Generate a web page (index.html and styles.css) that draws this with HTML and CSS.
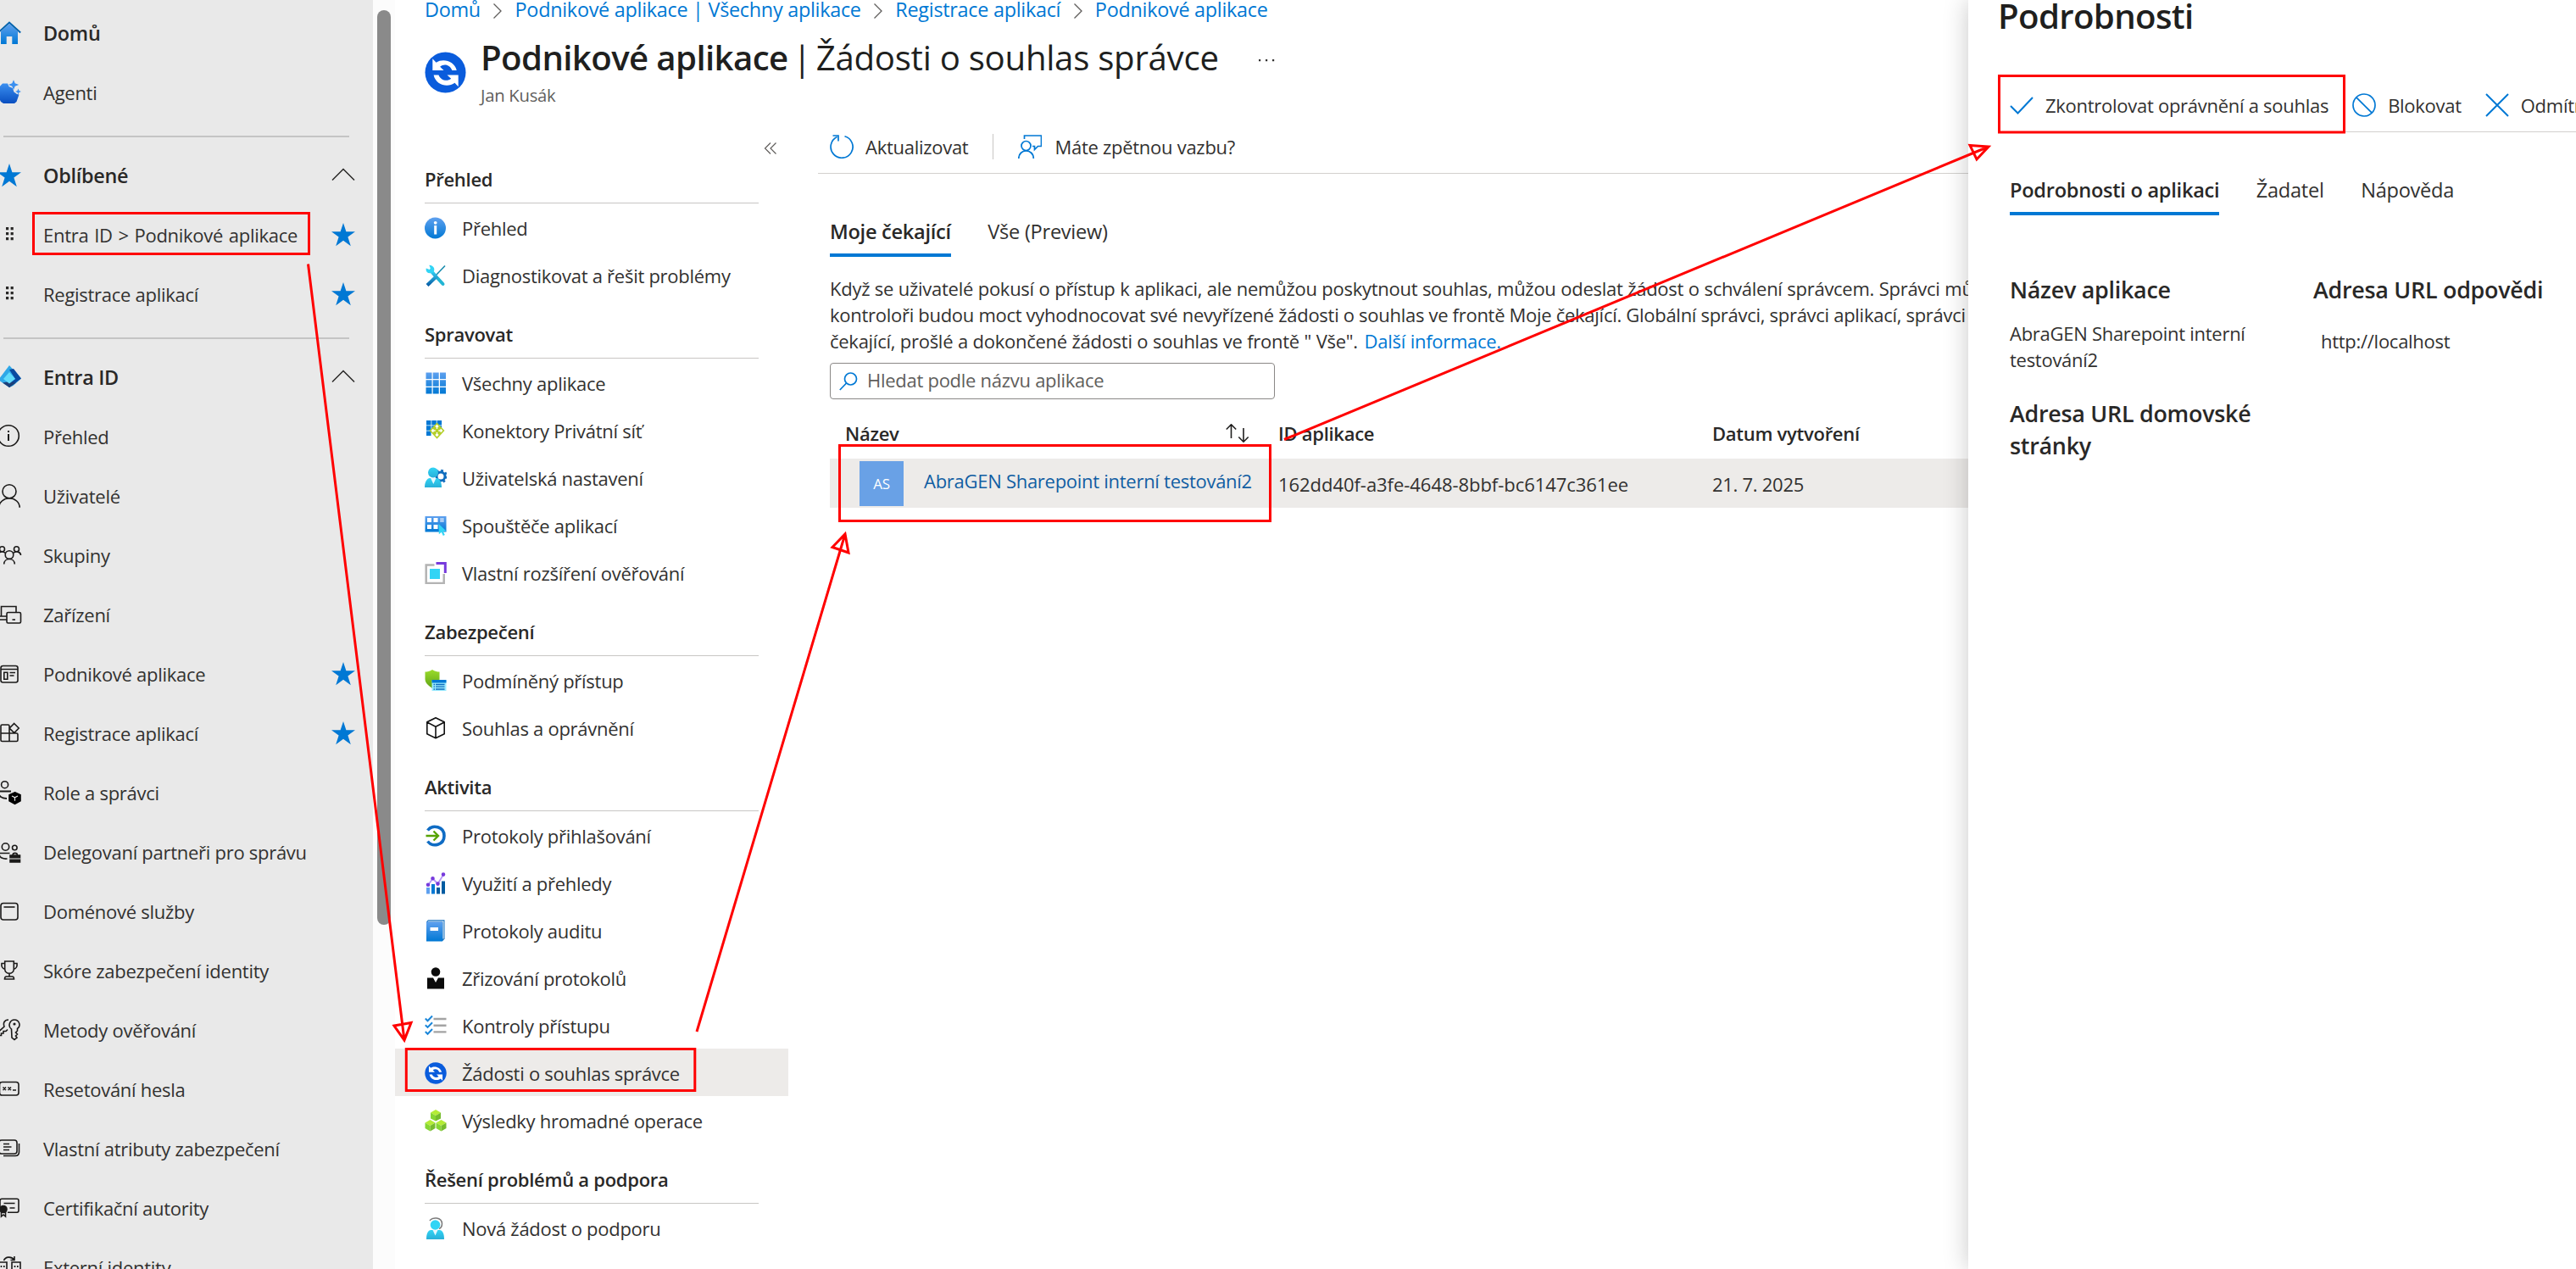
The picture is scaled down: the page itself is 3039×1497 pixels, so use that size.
FILE: index.html
```html
<!DOCTYPE html>
<html lang="cs">
<head>
  <meta charset="UTF-8">
  <meta name="viewport" content="width=device-width, initial-scale=1.0">
  <title>Podnikové aplikace | Žádosti o souhlas správce</title>
  <link rel="stylesheet" href="styles.css">
</head>
<body>
  <!-- shared icons -->
  <svg class="defs" width="0" height="0">
    <defs>
      <linearGradient id="blue" x1="0" y1="0" x2="0" y2="1"><stop offset="0" stop-color="#5ea0ef"/><stop offset="1" stop-color="#0078d4"/></linearGradient>
      <linearGradient id="deep" x1="0" y1="0" x2="0" y2="1"><stop offset="0" stop-color="#3a8ff0"/><stop offset="1" stop-color="#0a4fc0"/></linearGradient>
      <linearGradient id="cyan" x1="0" y1="0" x2="0" y2="1"><stop offset="0" stop-color="#32d4f5"/><stop offset="1" stop-color="#28afd8"/></linearGradient>
      <linearGradient id="green" x1="0" y1="0" x2="0" y2="1"><stop offset="0" stop-color="#9bdc2c"/><stop offset="1" stop-color="#5fa315"/></linearGradient>
      <linearGradient id="wrench" x1="0" y1="0" x2="0" y2="1"><stop offset="0" stop-color="#32d4f5"/><stop offset="1" stop-color="#0a5fa8"/></linearGradient>
    </defs>
    <symbol id="star" viewBox="0 0 28 28"><path fill="#0078d4" d="M14 0l3.400 10.200H28l-8.600 6.400 3.400 10.600L14 20.800l-8.800 6.400 3.400-10.600L0 10.200h10.600z"/></symbol>
    <symbol id="chevron" viewBox="0 0 28 28"><path fill="none" stroke="#292827" stroke-width="1.500" d="M1 19.500L14 6.500l13 13"/></symbol>
    <symbol id="dots" viewBox="0 0 28 28"><path fill="#292827" d="M10 5h3.200v3.200H10zM15.600 5h3.200v3.200h-3.200zM10 11h3.200v3.200H10zM15.600 11h3.200v3.200h-3.200zM10 17h3.200v3.200H10zM15.600 17h3.200v3.200h-3.200z"/></symbol>
    <symbol id="sync" viewBox="0 0 50 50">
      <circle cx="25" cy="25" r="24.500" fill="#0a5cdc"/>
      <path fill="#fff" d="M9.500 8.500v14h13.500l-4.500-4.500c5-4 12-2.500 14.500 4.500h5.500C36 11 22 7.500 13.800 13zM40.500 42V28H27l4.800 4.500c-5 4-12.500 2-15-4.500h-6C13.500 40.500 28 43.500 36.200 37.500z"/>
    </symbol>
    <symbol id="crumb" viewBox="0 0 12 20"><path fill="none" stroke="#605e5c" stroke-width="1.300" d="M1.500 1.500L10 10l-8.500 8.500"/></symbol>
  </svg>

  <div class="app">
    <nav class="sidebar">
      <div class="nav-item nav-head">
        <svg class="nav-icon" viewBox="0 0 28 28"><path fill="url(#blue)" d="M4 12L14 3l10 9v15h-6.700v-9h-6.600v9H4z"/><path fill="none" stroke="#0062ad" stroke-width="2" d="M.8 13.500L14 1.500l13.200 12"/></svg>
        <span>Domů</span>
      </div>
      <div class="nav-item">
        <svg class="nav-icon" viewBox="0 0 28 28"><path fill="url(#deep)" d="M6 3.500h6l1.500 3.500 4.500 2 1.500 4.500 3.500 2.500 2.500.5-3 8.500-2.500 2H7l-3-2-4-8v-7z"/><path fill="#3a8ff0" d="M19-.8l1.700 4.100 4.500 1.700-4.500 1.700L19 11l-1.700-4.300L12.800 5l4.500-1.700zM24.500 9.500l1 2.500 2.500 1-2.500 1-1 2.500-1-2.500-2.500-1 2.500-1z"/></svg>
        <span>Agenti</span>
      </div>
      <hr class="nav-line">
      <div class="nav-item nav-head">
        <svg class="nav-icon"><use href="#star"/></svg>
        <span>Oblíbené</span>
        <svg class="nav-end"><use href="#chevron"/></svg>
      </div>
      <div class="nav-item">
        <svg class="nav-icon"><use href="#dots"/></svg>
        <span class="path">Entra ID &gt; Podnikové aplikace</span>
        <svg class="nav-end"><use href="#star"/></svg>
      </div>
      <div class="nav-item">
        <svg class="nav-icon"><use href="#dots"/></svg>
        <span>Registrace aplikací</span>
        <svg class="nav-end"><use href="#star"/></svg>
      </div>
      <hr class="nav-line">
      <div class="nav-item nav-head">
        <svg class="nav-icon" viewBox="0 0 28 28"><path fill="#2fa8e8" d="M14 0L28 15.500l-9.500 8.500L14 26 1 17z"/><path fill="#0a4aa0" d="M14 5l5-1 9 11.500L14 26l-5-4.500L21 16z"/><path fill="#1d3f78" d="M14 19l8 1.500L14 26l-8-5.500z"/><path fill="#62dcfb" d="M14 8l7 8-7 5.500L7 16z"/></svg>
        <span>Entra ID</span>
        <svg class="nav-end"><use href="#chevron"/></svg>
      </div>
      <div class="nav-item">
        <svg class="nav-icon line" viewBox="0 0 28 28"><circle cx="13" cy="13" r="12.300"/><path stroke-width="2" d="M13 11v8M13 7v2"/></svg>
        <span>Přehled</span>
      </div>
      <div class="nav-item">
        <svg class="nav-icon line" viewBox="0 0 28 28"><circle cx="14" cy="8.700" r="8"/><path d="M1.800 27.800a12.200 11 0 0 1 24.400 0"/></svg>
        <span>Uživatelé</span>
      </div>
      <div class="nav-item">
        <svg class="nav-icon line" viewBox="0 0 28 28"><circle cx="14" cy="13.500" r="4.800"/><path d="M7.700 24.500c0-8 12.600-8 12.600 0"/><circle cx="22.500" cy="6.800" r="3"/><circle cx="5.500" cy="6.800" r="3"/><path d="M18.500 11.500c4-3.500 9-1 9 2.500M9.500 11.500c-4-3.500-9-1-9 2.500"/></svg>
        <span>Skupiny</span>
      </div>
      <div class="nav-item">
        <svg class="nav-icon line" viewBox="0 0 28 28"><path d="M4.500 15.500V4.500H22V11M0 16h11M0 20h11"/><rect x="11" y="11.500" width="16.500" height="12.500" rx="1.500"/><path d="M17.500 20h3.500"/></svg>
        <span>Zařízení</span>
      </div>
      <div class="nav-item">
        <svg class="nav-icon line" viewBox="0 0 28 28"><rect x="4" y="4.500" width="20" height="19.500" rx="2.500"/><path d="M4 8.500h20M14.500 12.500h6.500M14.500 16h5"/><path d="M7.800 12.300h4v8h-4z"/></svg>
        <span>Podnikové aplikace</span>
        <svg class="nav-end"><use href="#star"/></svg>
      </div>
      <div class="nav-item">
        <svg class="nav-icon line" viewBox="0 0 28 28"><path d="M14 5.500c0-1-.5-1.500-1.500-1.500H5.500C4.500 4 4 4.500 4 5.500V22c0 1 .5 1.500 1.500 1.500h17c1 0 1.500-.5 1.500-1.500v-6.500c0-1-.5-1.500-1.500-1.500H4M14 5v18.500M19.700 2.500l5.500 5.500-5.500 5.500L14.200 8z"/></svg>
        <span>Registrace aplikací</span>
        <svg class="nav-end"><use href="#star"/></svg>
      </div>
      <div class="nav-item">
        <svg class="nav-icon line" viewBox="0 0 28 28"><circle cx="8.600" cy="4.700" r="4"/><path stroke-width="2" d="M0 12.500h16M2 17c2 3 5 4 9 4"/><path fill="#000" stroke="#000" d="M20.500 13.800l6.500 3v7l-6.500 3.500-6.500-3.500v-7z"/><path stroke="#e9e9e9" stroke-width="1.200" d="M17 18l3.500 1.800L24 18M20.500 19.800v4"/></svg>
        <span>Role a správci</span>
      </div>
      <div class="nav-item">
        <svg class="nav-icon line" viewBox="0 0 28 28"><circle cx="9.500" cy="8" r="4.200"/><circle cx="20.300" cy="9" r="2.800"/><path d="M2 15.500h12.500M2 16c0 5 5 6.500 9.500 6"/><path fill="#1b1a19" d="M15 18h11.500v8H15z"/><path d="M18 18c0-3.500 5.500-3.500 5.500 0"/><path stroke="#e9e9e9" stroke-width="1" d="M14 22h13.500"/></svg>
        <span>Delegovaní partneři pro správu</span>
      </div>
      <div class="nav-item">
        <svg class="nav-icon line" viewBox="0 0 28 28"><rect x="4" y="4.500" width="20" height="19.500" rx="3"/><path d="M7.500 9h13"/></svg>
        <span>Doménové služby</span>
      </div>
      <div class="nav-item">
        <svg class="nav-icon line" viewBox="0 0 28 28"><path d="M8.700 3h10.600v9c0 7-10.600 7-10.600 0zM8.700 5.500H5c-.5 3 .5 6 4 7M19.300 5.500H23c.5 3-.5 6-4 7M14 17.500v3.500M8.500 24c0-2 .5-3 2-3h7c1.500 0 2 1 2 3z"/></svg>
        <span>Skóre zabezpečení identity</span>
      </div>
      <div class="nav-item">
        <svg class="nav-icon line" viewBox="0 0 28 28"><path d="M16.500 13c-5-4-1.500-11 3.500-11 6 0 8 7.500 3.500 10.500v2.500l-2 2 2 2-2 2 1.500 2-3 2.500-3-2.500zM13 2C8 2 6.500 6 8 10l-7.500 7v3.500h4v-2.500h2.500v-2.500h3l2-2"/><circle cx="20" cy="7" r=".8"/></svg>
        <span>Metody ověřování</span>
      </div>
      <div class="nav-item">
        <svg class="nav-icon line" viewBox="0 0 28 28"><rect x="2.500" y="5.500" width="22.500" height="15.500" rx="3"/><path d="M6.500 11.500l3.500 3.500M10 11.500L6.500 15M12.500 11.500l3.500 3.500M16 11.500L12.500 15M18 15h4"/></svg>
        <span>Resetování hesla</span>
      </div>
      <div class="nav-item">
        <svg class="nav-icon line" viewBox="0 0 28 28"><rect x="2" y="4" width="21" height="16" rx="3"/><path d="M25.500 8v10c0 3-1.500 4.500-4.500 4.500H7M7 8.500h7M7 12h9.500M7 15.500h7"/></svg>
        <span>Vlastní atributy zabezpečení</span>
      </div>
      <div class="nav-item">
        <svg class="nav-icon line" viewBox="0 0 28 28"><path d="M3 14V5.500C3 4 4 3.300 5 3.300h18c1 0 2 .7 2 2.200v11.500c0 1.500-1 2.200-2 2.200H12M7.500 8.500h13M14.500 14h6"/><circle cx="7" cy="15.500" r="4" fill="#1b1a19"/><path d="M4.500 18v6l2.500-2 2.500 2v-6"/></svg>
        <span>Certifikační autority</span>
      </div>
      <div class="nav-item">
        <svg class="nav-icon line" viewBox="0 0 28 28"><path d="M1 28V8h10v20M17 28V8h10v20M7.500 6c2-5 9-5 12-1M20 1v4.500h-4.500"/><path stroke-dasharray="2 2" d="M4.500 12v14M7.800 12v14M20.500 12v14M23.800 12v14"/></svg>
        <span>Externí identity</span>
      </div>
    </nav>
    <div class="scrollbar"><div class="thumb"></div></div>

    <main class="main">
      <header class="header">
        <div class="breadcrumb">
          <a>Domů</a><svg class="crumb"><use href="#crumb"/></svg>
          <a>Podnikové aplikace | Všechny aplikace</a><svg class="crumb"><use href="#crumb"/></svg>
          <a>Registrace aplikací</a><svg class="crumb"><use href="#crumb"/></svg>
          <a>Podnikové aplikace</a>
        </div>
        <div class="title-row">
          <svg class="title-icon"><use href="#sync"/></svg>
          <div>
            <h1 class="title"><b>Podnikové aplikace</b> <span class="bar">|</span> Žádosti o souhlas správce</h1>
            <div class="subtitle">Jan Kusák</div>
          </div>
          <svg class="more" viewBox="0 0 20 4"><path fill="#323130" d="M1 1h2.200v2.200H1zM9 1h2.200v2.200H9zM17 1h2.200v2.200H17z"/></svg>
        </div>
      </header>

      <div class="body">
        <aside class="menu">
          <div class="collapse"><svg width="16" height="14" viewBox="0 0 16 14"><path fill="none" stroke="#605e5c" stroke-width="1.200" d="M8 .5L1.500 7 8 13.500M14.500.5L8 7l6.500 6.500"/></svg></div>

          <h2 class="menu-title">Přehled</h2>
          <div class="menu-item">
            <svg class="menu-icon" viewBox="0 0 26 26"><circle cx="12.500" cy="13" r="12.500" fill="url(#blue)"/><path fill="#fff" d="M11.200 10h3v10.500h-3z"/><circle cx="12.700" cy="6.800" r="1.900" fill="#fff"/></svg>
            <span>Přehled</span>
          </div>
          <div class="menu-item">
            <svg class="menu-icon" viewBox="0 0 26 26"><path fill="none" stroke="#1a8cae" stroke-width="1.600" d="M24 1.500L13 13"/><path fill="none" stroke="#22b5d4" stroke-width="4" stroke-linecap="round" d="M15.500 16.500l6 6.500"/><path fill="none" stroke="url(#wrench)" stroke-width="4.200" d="M8 8l5.500 6.500L3 24.500"/><path fill="#32d4f5" d="M1.800 4.500l4 1.500 1-1.500-1.500-3.700c6 .2 7.200 5.200 5 8.200l-3 1.200c-4 .8-6.500-2-5.500-5.700z"/></svg>
            <span>Diagnostikovat a řešit problémy</span>
          </div>

          <h2 class="menu-title">Spravovat</h2>
          <div class="menu-item">
            <svg class="menu-icon" viewBox="0 0 26 26"><path fill="url(#blue)" d="M1.500.500h7v7.500h-7zM9.700.500h7v7.500h-7zM18 .500h7v7.500h-7zM1.500 9.200h7v7.500h-7zM9.700 9.200h7v7.500h-7zM18 9.200h7v7.500h-7zM1.500 18h7v7.500h-7zM9.700 18h7v7.500h-7zM18 18h7v7.500h-7z"/></svg>
            <span>Všechny aplikace</span>
          </div>
          <div class="menu-item">
            <svg class="menu-icon" viewBox="0 0 26 26"><path fill="#0078d4" d="M2 1h5.500v5.500H2zM8.300 1h5.500v5.500H8.300zM14.600 1h5.500v5.500h-5.500zM2 7.300h5.500v5.500H2zM8.300 7.300h5.500v5.500H8.300zM14.600 7.300h5.500v5.500h-5.500zM2 13.600h5.500v5.500H2z"/><path fill="#b4cf2a" d="M14.500 3.500l9 9.500-9 9.700-9-9.700z"/><path fill="none" stroke="#fff" stroke-width="1.400" d="M14.500 7v4M12.800 8.500l1.700-1.800 1.700 1.800M14.500 15v4M12.800 17.500l1.700 1.800 1.700-1.800M8.700 13h4M10.300 11.300L8.600 13l1.700 1.700M16.300 13h4M18.700 11.300l1.700 1.700-1.700 1.700"/></svg>
            <span>Konektory Privátní síť</span>
          </div>
          <div class="menu-item">
            <svg class="menu-icon" viewBox="0 0 26 26"><circle cx="19" cy="11" r="5" fill="none" stroke="#0f6cbd" stroke-width="3"/><circle cx="19" cy="11" r="7" fill="none" stroke="#0f6cbd" stroke-width="2.400" stroke-dasharray="2.700 2.800"/><circle cx="10" cy="6.500" r="6" fill="url(#cyan)"/><path fill="url(#cyan)" d="M0 24c0-7 3-11 6-11h8c3 0 6 4 6 11z"/><path fill="#e8f8fd" d="M7 13h6.500l-3.200 7z"/></svg>
            <span>Uživatelská nastavení</span>
          </div>
          <div class="menu-item">
            <svg class="menu-icon" viewBox="0 0 26 26"><path fill="url(#blue)" d="M.5 2h25v18.500H.5z"/><path fill="#fff" d="M3 4h5v5H3zM10.500 4h5v5h-5zM3 12h5v5H3zM10.500 12h5v5h-5z"/><path fill="#a9cdf5" d="M18.200 4h4.500v5h-4.500z"/><path fill="#32d4f5" d="M16.500 11l9 8.500-3.700.5 2 4-2 1-2-4.200-3 2.500z"/></svg>
            <span>Spouštěče aplikací</span>
          </div>
          <div class="menu-item">
            <svg class="menu-icon" viewBox="0 0 26 26"><path fill="none" stroke="#b3b3b3" stroke-width="2.500" d="M11.500 3.500H1.700v21.500h21V14"/><path fill="none" stroke="#773adc" stroke-width="3" d="M13.500 1.500h10.800v11.500"/><path fill="#32d4f5" d="M6 8h12v12H6z"/></svg>
            <span>Vlastní rozšíření ověřování</span>
          </div>

          <h2 class="menu-title">Zabezpečení</h2>
          <div class="menu-item">
            <svg class="menu-icon" viewBox="0 0 26 26"><path fill="url(#green)" d="M9 0c3 2 6 2.500 8.500 2.500V11c0 5-4 8-8.500 11C5 19 .5 16 .5 11V2.500C3 2.500 6 2 9 0z"/><path fill="#9cebff" d="M8.500 12.500H25.500V25H8.500z"/><path fill="#0078d4" d="M8.500 12h17v3.500h-17z"/><path stroke="#0f6cbd" stroke-width="1.300" d="M10.500 17.500H12M13 17.500h10.500M10.500 20.200H12M13 20.200h10.500M10.500 23H12M13 23h10.500"/></svg>
            <span>Podmíněný přístup</span>
          </div>
          <div class="menu-item">
            <svg class="menu-icon" viewBox="0 0 26 26"><path fill="none" stroke="#111" stroke-width="1.600" stroke-linejoin="round" d="M13 .8l10.200 5v14L13 24.800l-10.200-5v-14zM2.800 6L13 11.300 23.200 6M13 11.300v13.500"/></svg>
            <span>Souhlas a oprávnění</span>
          </div>

          <h2 class="menu-title">Aktivita</h2>
          <div class="menu-item">
            <svg class="menu-icon" viewBox="0 0 26 26"><path fill="none" stroke="#0f6cc4" stroke-width="3.600" d="M3.500 6.500c6-7.500 19.500-4.500 19.500 6.500S9.500 27 3.500 19.500"/><path fill="none" stroke="#57a300" stroke-width="2.400" d="M1.500 13h14M10.500 7.500l5.500 5.500-5.500 5.500"/></svg>
            <span>Protokoly přihlašování</span>
          </div>
          <div class="menu-item">
            <svg class="menu-icon" viewBox="0 0 26 26"><path fill="#5ea0ef" d="M2 18h4v7.500H2z"/><path fill="#0078d4" d="M8 14h4v11.500H8z"/><path fill="#005ba1" d="M14 18h4v7.500h-4zM20 10.500h4v15h-4z"/><path fill="none" stroke="#b796f9" stroke-width="1.800" d="M4 15l5.500-7.500 6 6L22 3"/><path fill="#773adc" d="M4 12.500a2.300 2.300 0 1 1 0 4.600 2.300 2.300 0 0 1 0-4.600zM9.500 5a2.300 2.300 0 1 1 0 4.600 2.300 2.300 0 0 1 0-4.600zM15.500 11.300a2.300 2.300 0 1 1 0 4.600 2.300 2.300 0 0 1 0-4.600zM22 .3a2.300 2.300 0 1 1 0 4.600 2.300 2.300 0 0 1 0-4.600z"/></svg>
            <span>Využití a přehledy</span>
          </div>
          <div class="menu-item">
            <svg class="menu-icon" viewBox="0 0 26 26"><path fill="#0f6cbd" d="M2 2.500L4 .3h19.500v22L21.500 25z"/><path fill="#fff" d="M4 1.500h18.500v21h-1V2.500H3.500z"/><path fill="url(#blue)" d="M2 2.500h19v23H2z"/><path fill="#fff" d="M6.500 9h9.500v4H6.500z"/></svg>
            <span>Protokoly auditu</span>
          </div>
          <div class="menu-item">
            <svg class="menu-icon" viewBox="0 0 26 26"><circle cx="13" cy="5.500" r="5.300" fill="#0b0b0b"/><path fill="#0b0b0b" d="M3 12.500h7l3 5.500 3-5.500h7v13H3z"/></svg>
            <span>Zřizování protokolů</span>
          </div>
          <div class="menu-item">
            <svg class="menu-icon" viewBox="0 0 26 26"><path stroke="#a3a3a3" stroke-width="2.400" d="M10.500 5h15M10.500 12.700h15M10.500 20.400h15"/><path fill="none" stroke="#1a86d9" stroke-width="2" d="M.8 4.500l2.700 2.700L9 1.500M.8 12.200l2.700 2.700L9 9.200M.8 20l2.700 2.700L9 17"/></svg>
            <span>Kontroly přístupu</span>
          </div>
          <div class="menu-item selected">
            <svg class="menu-icon"><use href="#sync"/></svg>
            <span>Žádosti o souhlas správce</span>
          </div>
          <div class="menu-item">
            <svg class="menu-icon" viewBox="0 0 26 26"><path fill="#b4ec36" d="M13 0l6 3.500-6 3.500-6-3.500zM6.500 12l6 3.500-6 3.500-6-3.500zM19.500 12l6 3.500-6 3.500-6-3.500z"/><path fill="#86d633" d="M7 3.500l6 3.500v6.500L7 10.500zM.5 15.500l6 3.500v6.500l-6-3.500zM13.500 15.500l6 3.500v6.500l-6-3.500z"/><path fill="#76bc2d" d="M19 3.500L13 7v6.500l6-3zM12.500 15.500l-6 3.500v6.500l6-3.500zM25.500 15.500l-6 3.500v6.500l6-3.500z"/></svg>
            <span>Výsledky hromadné operace</span>
          </div>

          <h2 class="menu-title">Řešení problémů a podpora</h2>
          <div class="menu-item">
            <svg class="menu-icon" viewBox="0 0 26 26"><path fill="none" stroke="#7a7a7a" stroke-width="1.500" d="M6 4C9-.5 20-.5 20.500 7.500c0 3-1 5-3.500 6"/><circle cx="12.500" cy="9" r="5.800" fill="#32d4f5"/><path fill="url(#cyan)" d="M2 26c0-7 2-11 5.500-11h10c3.500 0 5.500 4 5.500 11z"/><path fill="#e8f8fd" d="M9.500 15h6l-3 6.500z"/></svg>
            <span>Nová žádost o podporu</span>
          </div>
        </aside>

        <section class="content">
          <div class="toolbar">
            <svg class="tool-icon" viewBox="0 0 28 28"><path d="M17.500 1.700A13 13 0 1 1 8.500 2.500M3.500 1H10v6.500"/></svg>
            <span>Aktualizovat</span>
            <i class="separator"></i>
            <svg class="tool-icon feedback" viewBox="0 0 28 28"><circle cx="9.500" cy="13" r="5.500"/><path d="M.8 28c0-12 17.500-12 17.500 0M7.500 5V1h20v12.500h-4l-4 4v-4h-2.500"/></svg>
            <span>Máte zpětnou vazbu?</span>
          </div>
          <div class="tabs">
            <span class="tab active">Moje čekající</span>
            <span class="tab">Vše (Preview)</span>
          </div>
          <p class="info">Když se uživatelé pokusí o přístup k aplikaci, ale nemůžou poskytnout souhlas, můžou odeslat žádost o schválení správcem. Správci můžou<br>
            <span class="tight">kontroloři budou moct vyhodnocovat své nevyřízené žádosti o souhlas ve frontě Moje čekající. Globální správci, správci aplikací, správci</span><br>
            čekající, prošlé a dokončené žádosti o souhlas ve frontě " Vše". <a>Další informace.</a></p>
          <div class="search">
            <svg width="22" height="22" viewBox="0 0 22 22"><circle cx="13.500" cy="8" r="7"/><path d="M8.500 13L.8 21"/></svg>
            <span>Hledat podle názvu aplikace</span>
          </div>
          <div class="table-row table-head">
            <div class="cell-name">Název <svg class="sort" viewBox="0 0 28 22"><path d="M6.500 17V1M.8 6.500l5.700-5.700 5.700 5.700M21 5v16M15.300 15.500l5.700 5.700 5.700-5.700"/></svg></div>
            <div>ID aplikace</div>
            <div>Datum vytvoření</div>
          </div>
          <div class="table-row table-data">
            <div class="cell-app"><span class="tile">AS</span><a>AbraGEN Sharepoint interní testování2</a></div>
            <div class="app-id">162dd40f-a3fe-4648-8bbf-bc6147c361ee</div>
            <div>21. 7. 2025</div>
          </div>
        </section>
      </div>
    </main>

    <section class="details">
      <h1 class="details-title">Podrobnosti</h1>
      <div class="toolbar details-toolbar">
        <svg class="tool-icon check" viewBox="0 0 28 28"><path d="M1 15l8.500 8.500L27 5"/></svg>
        <span>Zkontrolovat oprávnění a souhlas</span>
        <svg class="tool-icon next" viewBox="0 0 28 28"><circle cx="14" cy="14" r="13"/><path d="M4.800 4.800l18.400 18.400"/></svg>
        <span>Blokovat</span>
        <svg class="tool-icon next check" viewBox="0 0 28 28"><path d="M1 1l26 26M27 1L1 27"/></svg>
        <span>Odmítnout</span>
      </div>
      <div class="tabs">
        <span class="tab active">Podrobnosti o aplikaci</span>
        <span class="tab">Žadatel</span>
        <span class="tab">Nápověda</span>
      </div>
      <div class="fields">
        <div class="field-col">
          <h3>Název aplikace</h3>
          <p>AbraGEN Sharepoint interní testování2</p>
          <h3>Adresa URL domovské stránky</h3>
        </div>
        <div>
          <h3>Adresa URL odpovědi</h3>
          <p class="reply">http://localhost</p>
        </div>
      </div>
    </section>
  </div>

  <!-- red callouts over the page -->
  <svg class="callouts" viewBox="0 0 3039 1497">
    <rect x="39.500" y="251.500" width="325" height="48"/>
    <rect x="479.300" y="1237.500" width="340.500" height="49"/>
    <rect x="990.500" y="525.500" width="508" height="89"/>
    <rect x="2358.500" y="89.500" width="407" height="66.500"/>
    <path d="M363.500 311.500L477 1227M465 1210l20-3.500-8 20.500z"/>
    <path d="M822 1217L997 630M982 645.500l19 6.500-4-22z"/>
    <path d="M1515 518.500L2346 173M2324 171.500l22 1.500-14 15z"/>
  </svg>
</body>
</html>
```
FILE: styles.css
```css
* {
    margin: 0;
    padding: 0;
    box-sizing: border-box;
}

body {
    font-family: 'Open Sans', 'Noto Sans', sans-serif;
    font-size: 22px;
    letter-spacing: -0.0125em;
    color: #323130;
    background: #fff;
    overflow: hidden;
}

svg {
    display: block;
    flex-shrink: 0;
}

.defs {
    position: absolute;
}

.app {
    position: relative;
    display: flex;
    height: 1497px;
    overflow: hidden;
}

/* left navigation */
.sidebar {
    width: 440px;
    flex-shrink: 0;
    padding-top: 4px;
    background: #e9e9e9;
    overflow: hidden;
}

.nav-item {
    display: flex;
    align-items: center;
    height: 70px;
    padding-right: 21px;
    white-space: nowrap;
}

.nav-item span {
    padding-bottom: 1px;
}

.nav-head {
    font-size: 23.4px;
    font-weight: 600;
    color: #292827;
}

.nav-icon {
    width: 28px;
    height: 28px;
    margin-left: -3px;
    margin-right: 26px;
    overflow: visible;
}

.nav-end {
    width: 28px;
    height: 28px;
    margin-left: auto;
}

.path {
    word-spacing: 1.3px;
}

.line {
    fill: none;
    stroke: #1b1a19;
    stroke-width: 1.6;
}

.nav-line {
    height: 2px;
    margin: 16px 28px 10px 4px;
    border: none;
    background: #c4c4c4;
}

.scrollbar {
    width: 26px;
    flex-shrink: 0;
    padding: 12px 5px;
    background: #fcfcfc;
}

.thumb {
    width: 16px;
    height: 1079px;
    border-radius: 8px;
    background: #8a8a8a;
}

/* header */
.main {
    flex: 1;
    min-width: 0;
}

.header {
    height: 140px;
    padding-left: 35px;
}

.breadcrumb {
    display: flex;
    align-items: center;
    gap: 14.3px;
    height: 22px;
    font-size: 23.4px;
    line-height: 22px;
    color: #0078d4;
    white-space: nowrap;
}

.crumb {
    width: 12px;
    height: 20px;
    margin-top: 4px;
}

.title-row {
    display: flex;
    margin-top: 18px;
    white-space: nowrap;
}

.title-icon {
    width: 49px;
    height: 49px;
    margin: 21px 17px 0 0;
}

.title {
    font-size: 40.2px;
    font-weight: 400;
    line-height: 56px;
    color: #201f1e;
}

.title b {
    font-weight: 600;
    letter-spacing: -0.0155em;
}

.bar {
    margin: 0 -4.5px;
}

.subtitle {
    font-size: 20.3px;
    line-height: 32px;
    color: #605e5c;
}

.more {
    width: 20px;
    height: 4px;
    margin: 29px 0 0 46px;
}

.body {
    display: flex;
}

/* resource menu */
.menu {
    width: 464px;
    flex-shrink: 0;
}

.collapse {
    display: flex;
    justify-content: flex-end;
    height: 29px;
    padding: 28px 13px 0 0;
}

.menu-title {
    height: 71px;
    margin: 0 35px;
    padding-top: 26px;
    border-bottom: 1px solid #c8c6c4;
    font-size: 22px;
    font-weight: 600;
    line-height: 32px;
    color: #292827;
}

.menu-item {
    display: flex;
    align-items: center;
    height: 56px;
    padding: 2px 0 0 35px;
    white-space: nowrap;
}

.menu-icon {
    width: 26px;
    height: 26px;
    margin-right: 18px;
}

.selected {
    background: #edebe9;
}

/* content */
.content {
    flex: 1;
    min-width: 0;
    padding-left: 35px;
    white-space: nowrap;
}

.toolbar {
    display: flex;
    align-items: center;
    height: 65px;
    padding: 2px 0 0 14px;
    border-bottom: 1px solid #d2d0ce;
}

.tool-icon {
    width: 28px;
    height: 28px;
    margin-right: 14px;
    fill: none;
    stroke: #0078d4;
    stroke-width: 1.7;
}

.feedback {
    margin-right: 15px;
}

.separator {
    width: 1px;
    height: 30px;
    margin: 0 29px;
    background: #c8c6c4;
}

.tabs {
    display: flex;
    gap: 43.5px;
    margin: 52px 0 0 14px;
    font-size: 23.6px;
    line-height: 32px;
}

.tab {
    padding-bottom: 10px;
    border-bottom: 4px solid transparent;
}

.active {
    border-color: #0078d4;
    font-weight: 600;
    color: #292827;
}

.info {
    margin: 22px 0 0 14px;
    line-height: 31px;
    word-spacing: 0.25px;
}

.tight {
    word-spacing: -0.1px;
}

.info a {
    margin-left: 2px;
    color: #0078d4;
}

.search {
    display: flex;
    align-items: center;
    gap: 11px;
    width: 525px;
    height: 43px;
    margin: 10px 0 0 14px;
    padding: 0 10px;
    border: 1px solid #8a8886;
    border-radius: 4px;
    color: #605e5c;
}

.search span {
    padding-bottom: 3px;
}

.search svg {
    fill: none;
    stroke: #0078d4;
    stroke-width: 1.7;
}

.table-row {
    display: grid;
    grid-template-columns: 529px 512px 1fr;
    align-items: center;
    margin-left: 14px;
}

.table-head {
    height: 59px;
    margin-top: 11px;
    padding-bottom: 1px;
    font-weight: 600;
    color: #292827;
}

.cell-name {
    display: flex;
    align-items: center;
    justify-content: space-between;
    padding: 0 34px 0 18px;
}

.sort {
    width: 28px;
    height: 22px;
    fill: none;
    stroke: #201f1e;
    stroke-width: 1.6;
}

.table-data {
    height: 58px;
    padding-top: 1px;
    background: #edebe9;
}

.cell-app {
    display: flex;
    padding-left: 35px;
    line-height: 47px;
}

.cell-app a {
    color: #115ea3;
}

.app-id {
    letter-spacing: -0.002em;
}

.tile {
    width: 52px;
    height: 53px;
    margin-right: 24px;
    background: #69a1e6;
    font-size: 17px;
    line-height: 53px;
    text-align: center;
    color: #fff;
}

/* details blade, lies over the content */
.details {
    position: absolute;
    top: 0;
    left: 2322px;
    width: 717px;
    height: 1497px;
    padding-left: 35px;
    background: #fff;
    box-shadow: 0 0 28px rgba(0, 0, 0, 0.22);
    overflow: visible;
    white-space: nowrap;
}

.details-title {
    font-size: 40.2px;
    font-weight: 600;
    letter-spacing: -0.0165em;
    line-height: 38px;
    color: #201f1e;
}

.details-toolbar {
    height: 63px;
    margin-top: 55px;
    padding: 0 0 0 14px;
    overflow: hidden;
}

.details .tabs,
.fields {
    margin-left: 14px;
}

.next {
    margin-left: 28px;
}

.check {
    stroke-width: 2;
}

.fields {
    display: grid;
    grid-template-columns: 358px 1fr;
    margin-top: 69px;
}

.field-col {
    padding-right: 58px;
    white-space: normal;
}

.fields h3 {
    font-size: 26.9px;
    font-weight: 600;
    line-height: 38px;
    color: #292827;
}

.fields p {
    margin: 17px 0 29px;
    line-height: 31px;
}

.fields .reply {
    margin: 26px 0 0 9px;
}

.callouts {
    position: absolute;
    top: 0;
    left: 0;
    width: 3039px;
    height: 1497px;
    fill: none;
    stroke: #f00;
    stroke-width: 3;
}
```
